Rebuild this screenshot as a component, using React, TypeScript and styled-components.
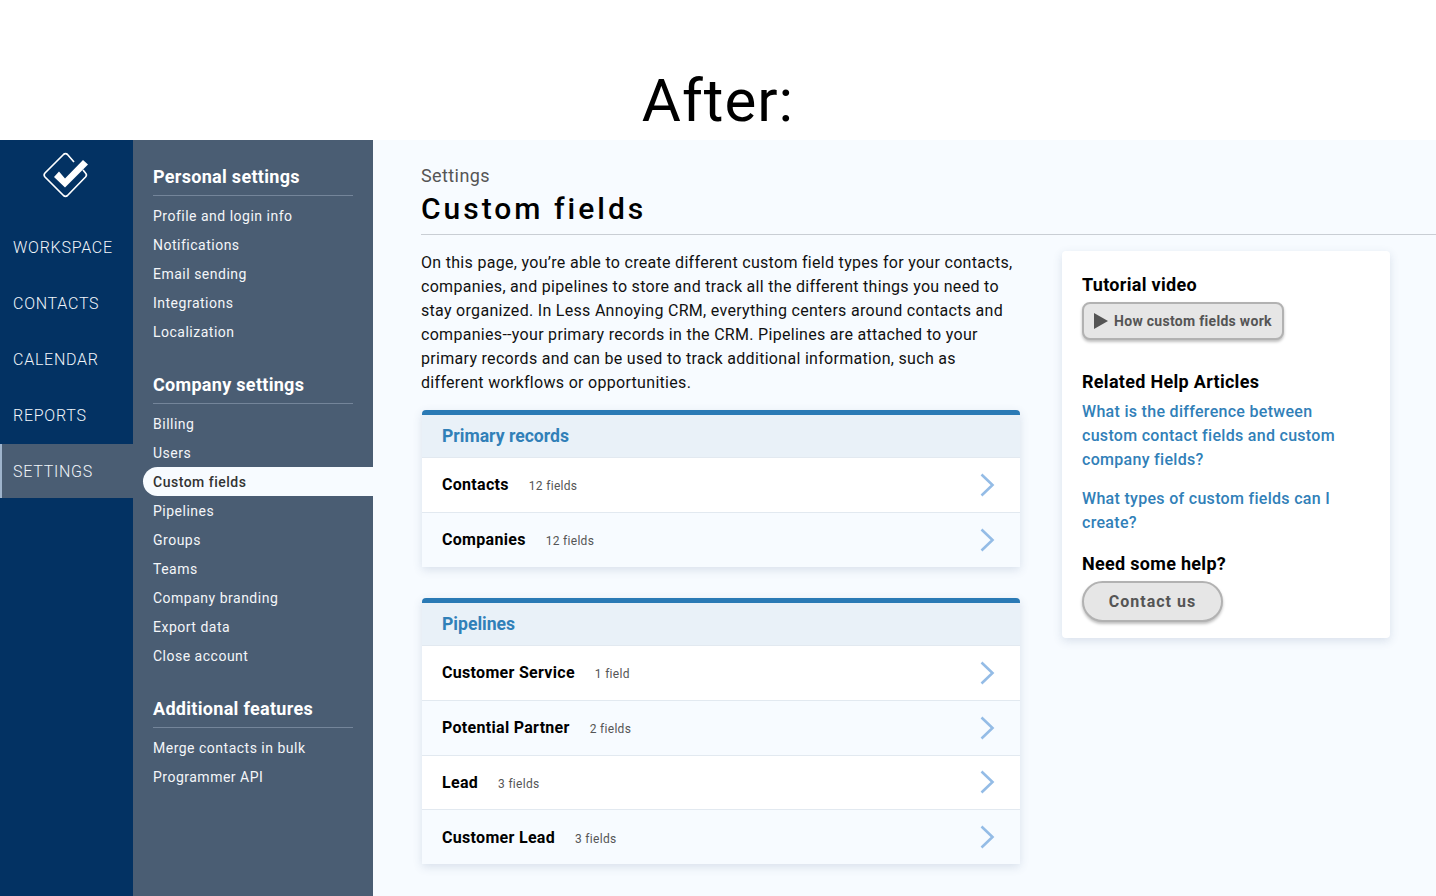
import styled, { createGlobalStyle } from "styled-components";

const GlobalStyle = createGlobalStyle`
    * { box-sizing: border-box; }
    html, body {
        margin: 0;
        height: 896px;
        overflow: hidden;
        background: #fff;
        font-family: Roboto, "Liberation Sans", sans-serif;
    }
`;

const Caption = styled.h1`
    height: 140px;
    margin: 0;
    padding-top: 66px;
    text-align: center;
    font-size: 60px;
    line-height: 70px;
    font-weight: 400;
    letter-spacing: 1px;
    color: #000;
`;

const Shell = styled.div`
    display: flex;
    height: 756px;
    overflow: hidden;
`;

const MainNav = styled.nav`
    width: 133px;
    flex: none;
    background: #033263;
`;

const LogoWrap = styled.div`
    height: 80px;
    padding: 12px 0 0 41px;
`;

const NavItem = styled.div<{ $active?: boolean }>`
    height: 54px;
    margin-bottom: 2px;
    padding-left: ${({ $active }) => ($active ? "11px" : "13px")};
    display: flex;
    align-items: center;
    font-size: 16px;
    letter-spacing: 0.75px;
    font-weight: 300;
    color: #f1f5fa;
    background: ${({ $active }) => ($active ? "#4a5d73" : "transparent")};
    border-left: ${({ $active }) => ($active ? "2px solid #9fb4cc" : "none")};
`;

const SubNav = styled.aside`
    width: 240px;
    flex: none;
    background: #4a5d73;
    padding-top: 21px;
`;

const SubGroup = styled.div`
    margin-bottom: 23px;
`;

const SubHeading = styled.h3`
    margin: 0 20px 5px;
    height: 35px;
    padding-top: 2px;
    border-bottom: 1px solid #74859a;
    font-size: 18px;
    line-height: 27px;
    font-weight: 700;
    letter-spacing: 0.3px;
    color: #fff;
`;

const SubLink = styled.div<{ $active?: boolean }>`
    height: 29px;
    margin-left: 10px;
    padding-left: 10px;
    display: flex;
    align-items: center;
    font-size: 14px;
    letter-spacing: 0.5px;
    color: ${({ $active }) => ($active ? "#333" : "#f4f6f9")};
    font-weight: ${({ $active }) => ($active ? 500 : 400)};
    background: ${({ $active }) => ($active ? "#f7fbff" : "transparent")};
    border-radius: 15px 0 0 15px;
`;

const Content = styled.main`
    flex: 1;
    min-width: 0;
    background: #f7fbff;
    padding: 24px 0 0 48px;
`;

const Crumb = styled.div`
    font-size: 18px;
    line-height: 24px;
    letter-spacing: 0.4px;
    color: #555;
`;

const Title = styled.h2`
    margin: 0;
    height: 47px;
    padding-top: 3px;
    font-size: 30px;
    line-height: 36px;
    font-weight: 500;
    letter-spacing: 3px;
    color: #000;
    border-bottom: 1px solid #c9ced4;
`;

const Columns = styled.div`
    display: flex;
    align-items: flex-start;
    padding-top: 16px;
`;

const LeftColumn = styled.div`
    width: 600px;
    flex: none;
`;

const Intro = styled.p`
    margin: 0 0 15px;
    font-size: 16px;
    line-height: 24px;
    letter-spacing: 0.3px;
    color: #111;
`;

const Card = styled.section`
    margin: 0 1px 31.4px;
    background: #fff;
    border-top: 5px solid #2a7ab5;
    border-radius: 4px 4px 0 0;
    box-shadow: 0 3px 10px rgba(60, 90, 130, 0.16);
`;

const CardHeader = styled.div`
    height: 42px;
    padding-left: 20px;
    display: flex;
    align-items: center;
    font-size: 17.6px;
    font-weight: 700;
    color: #3180b8;
    background: #e9f1f8;
`;

const Row = styled.div`
    height: 54.8px;
    padding: 0 25px 0 20px;
    display: flex;
    align-items: center;
    justify-content: space-between;
    border-top: 1px solid #e2e9f0;
    &:nth-child(odd) {
        background: #f7fbff;
    }
`;

const RowLabel = styled.div`
    display: flex;
    align-items: baseline;
    gap: 20px;
`;

const RowName = styled.span`
    font-size: 16px;
    font-weight: 700;
    letter-spacing: 0.3px;
    color: #000;
`;

const RowCount = styled.span`
    font-size: 12px;
    letter-spacing: 0.3px;
    color: #555;
`;

const SideCard = styled.aside`
    width: 328px;
    flex: none;
    margin-left: 41px;
    padding: 22px 20px 16px;
    background: #fff;
    border-radius: 4px;
    box-shadow: 0 3px 10px rgba(60, 90, 130, 0.16);
`;

const SideHeading = styled.h4<{ $gap?: number }>`
    margin: 0 0 ${({ $gap }) => $gap ?? 0}px;
    font-size: 18px;
    line-height: 24px;
    font-weight: 700;
    letter-spacing: 0.3px;
    color: #000;
`;

const VideoButton = styled.button`
    margin: 5px 0 30px;
    height: 38px;
    padding: 0 10px;
    display: flex;
    align-items: center;
    gap: 6px;
    font-family: inherit;
    font-size: 14px;
    font-weight: 700;
    letter-spacing: 0.3px;
    color: #555;
    background: #e6e6e6;
    border: 2px solid #b2b2b2;
    border-radius: 8px;
    box-shadow: 0 2px 3px rgba(0, 0, 0, 0.25);
`;

const HelpLink = styled.a`
    display: block;
    margin-bottom: 15px;
    font-size: 16px;
    line-height: 24px;
    font-weight: 500;
    letter-spacing: 0.3px;
    color: #3180b8;
    & + h4 {
        margin-top: 17px;
    }
`;

const ContactButton = styled.button`
    margin-top: 5px;
    width: 141px;
    height: 41px;
    font-family: inherit;
    font-size: 16px;
    font-weight: 700;
    letter-spacing: 1px;
    color: #555;
    background: #e6e6e6;
    border: 2px solid #b2b2b2;
    border-radius: 21px;
    box-shadow: 0 2px 3px rgba(0, 0, 0, 0.25);
`;

function Logo() {
    return (
        <svg width="50" height="50" viewBox="0 0 50 50" fill="none">
            <path
                d="M33 10 L26.5 2.5 Q24.5 0.7 22.5 2.5 L4 21 Q2.3 23 4 25 L22.5 43.5 Q24.5 45.3 26.5 43.5 L44.5 25 Q46.3 23 44.5 21 L42 18"
                stroke="#fff"
                strokeWidth="1.7"
            />
            <path d="M13 25 L18 19.5 L24 26.5 L42 8 L47 12.5 L24 35.5 Z" fill="#fff" />
        </svg>
    );
}

function Chevron() {
    return (
        <svg width="16" height="24" viewBox="0 0 16 24" fill="none">
            <path d="M2.5 1.5 L13.5 12 L2.5 22.5" stroke="#94bce6" strokeWidth="2.6" />
        </svg>
    );
}

const mainNav = ["WORKSPACE", "CONTACTS", "CALENDAR", "REPORTS", "SETTINGS"];

const subNav = [
    { title: "Personal settings", links: ["Profile and login info", "Notifications", "Email sending", "Integrations", "Localization"] },
    { title: "Company settings", links: ["Billing", "Users", "Custom fields", "Pipelines", "Groups", "Teams", "Company branding", "Export data", "Close account"] },
    { title: "Additional features", links: ["Merge contacts in bulk", "Programmer API"] },
];

const cards = [
    { title: "Primary records", rows: [["Contacts", "12 fields"], ["Companies", "12 fields"]] },
    { title: "Pipelines", rows: [["Customer Service", "1 field"], ["Potential Partner", "2 fields"], ["Lead", "3 fields"], ["Customer Lead", "3 fields"]] },
];

export default function App() {
    return (
        <>
            <GlobalStyle />
            <Caption>After:</Caption>
            <Shell>
                <MainNav>
                    <LogoWrap><Logo /></LogoWrap>
                    {mainNav.map(item => (
                        <NavItem key={item} $active={item === "SETTINGS"}>{item}</NavItem>
                    ))}
                </MainNav>
                <SubNav>
                    {subNav.map(group => (
                        <SubGroup key={group.title}>
                            <SubHeading>{group.title}</SubHeading>
                            {group.links.map(link => (
                                <SubLink key={link} $active={link === "Custom fields"}>{link}</SubLink>
                            ))}
                        </SubGroup>
                    ))}
                </SubNav>
                <Content>
                    <Crumb>Settings</Crumb>
                    <Title>Custom fields</Title>
                    <Columns>
                        <LeftColumn>
                            <Intro>
                                On this page, you’re able to create different custom field types for your contacts,
                                companies, and pipelines to store and track all the different things you need to
                                stay organized. In Less Annoying CRM, everything centers around contacts and
                                companies--your primary records in the CRM. Pipelines are attached to your
                                primary records and can be used to track additional information, such as
                                different workflows or opportunities.
                            </Intro>
                            {cards.map(card => (
                                <Card key={card.title}>
                                    <CardHeader>{card.title}</CardHeader>
                                    {card.rows.map(([name, count]) => (
                                        <Row key={name}>
                                            <RowLabel>
                                                <RowName>{name}</RowName>
                                                <RowCount>{count}</RowCount>
                                            </RowLabel>
                                            <Chevron />
                                        </Row>
                                    ))}
                                </Card>
                            ))}
                        </LeftColumn>
                        <SideCard>
                            <SideHeading>Tutorial video</SideHeading>
                            <VideoButton>
                                <svg width="14" height="16" viewBox="0 0 14 16"><path d="M0 0 L14 8 L0 16 Z" fill="#555" /></svg>
                                How custom fields work
                            </VideoButton>
                            <SideHeading $gap={6}>Related Help Articles</SideHeading>
                            <HelpLink>What is the difference between custom contact fields and custom company fields?</HelpLink>
                            <HelpLink>What types of custom fields can I create?</HelpLink>
                            <SideHeading>Need some help?</SideHeading>
                            <ContactButton>Contact us</ContactButton>
                        </SideCard>
                    </Columns>
                </Content>
            </Shell>
        </>
    );
}
